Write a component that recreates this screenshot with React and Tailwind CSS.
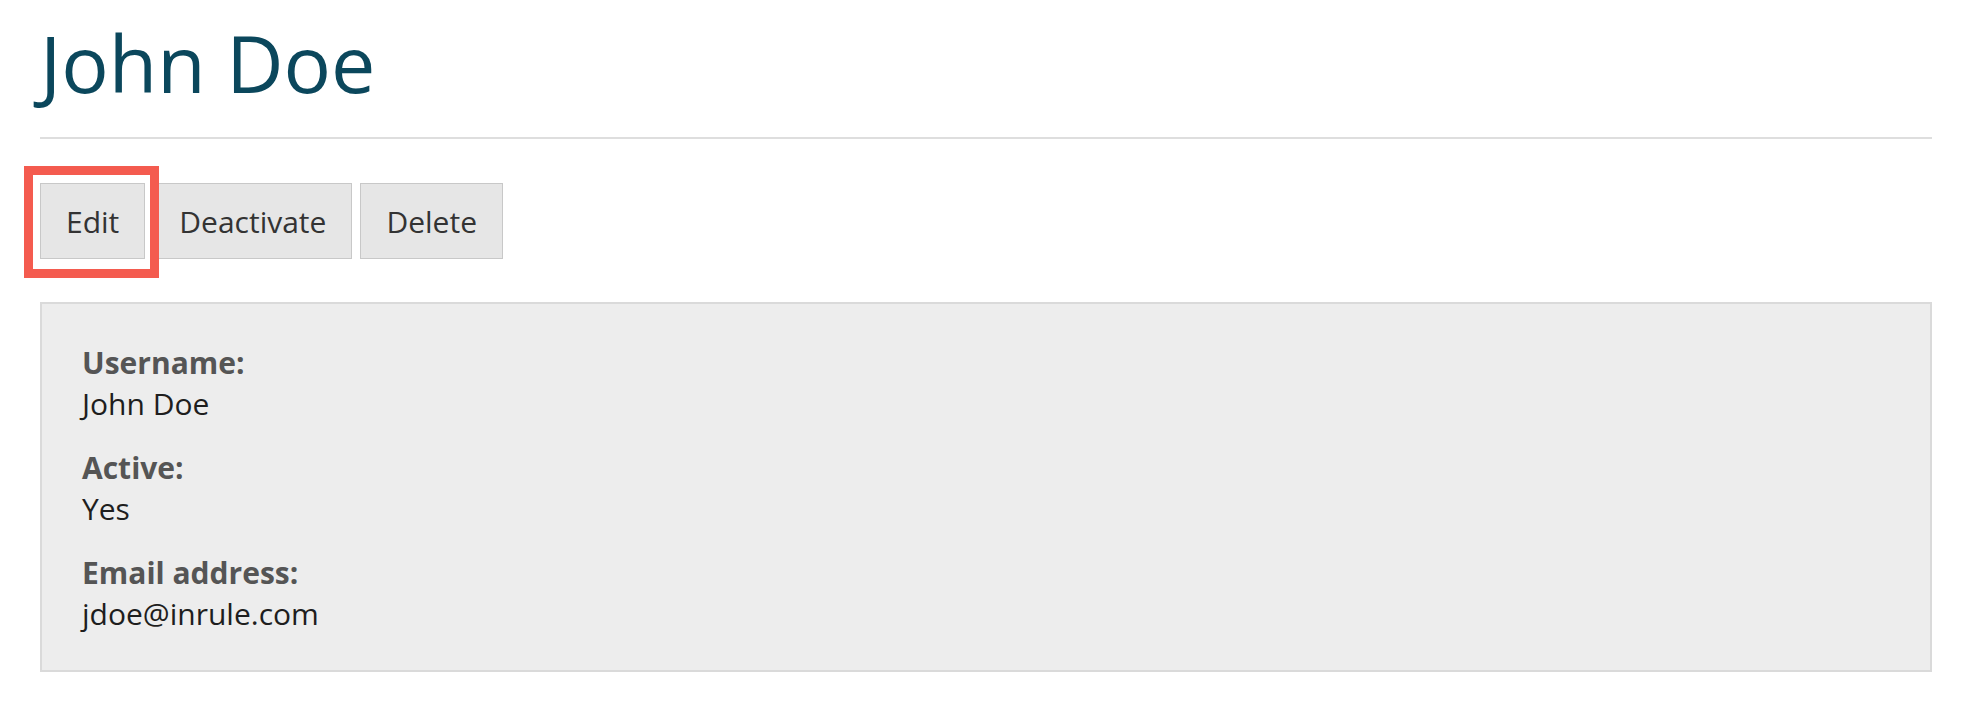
export default function App() {
  const font = { fontFamily: '"Open Sans", "Noto Sans", sans-serif' };
  return (
    <div className="min-h-[718px] bg-white px-[40px] pt-[18px]" style={font}>
      <h1 className="text-[79px] leading-[90px] font-normal text-[#0b475c]">John Doe</h1>
      <div className="mt-[29px] h-[2px] bg-[#dedede]" />
      <div className="mt-[44px] flex gap-[8px]">
        <div className="relative">
          <button className="flex h-[76px] items-center border border-[#c8c8c8] bg-[#e6e6e6] px-[25px] text-[30px] leading-[41px] text-[#333333]">
            Edit
          </button>
          <div className="pointer-events-none absolute left-[-16px] top-[-17px] h-[112px] w-[135px] border-[9px] border-[#f45b4f]" />
        </div>
        <button className="flex h-[76px] items-center border border-[#c8c8c8] bg-[#e6e6e6] px-[25px] text-[30px] leading-[41px] text-[#333333]">
          Deactivate
        </button>
        <button className="flex h-[76px] items-center border border-[#c8c8c8] bg-[#e6e6e6] px-[25px] text-[30px] leading-[41px] text-[#333333]">
          Delete
        </button>
      </div>
      <div className="mt-[43px] border-2 border-[#dadada] bg-[#ededed] px-[40px] pt-[38px] pb-[36px]">
        <dl className="text-[30px] leading-[41px]">
          <dt className="font-bold text-[#555555]">Username:</dt>
          <dd className="mb-[23px] text-[#1e1e1e]">John Doe</dd>
          <dt className="font-bold text-[#555555]">Active:</dt>
          <dd className="mb-[23px] text-[#1e1e1e]">Yes</dd>
          <dt className="font-bold text-[#555555]">Email address:</dt>
          <dd className="text-[#1e1e1e]">jdoe@inrule.com</dd>
        </dl>
      </div>
    </div>
  );
}
